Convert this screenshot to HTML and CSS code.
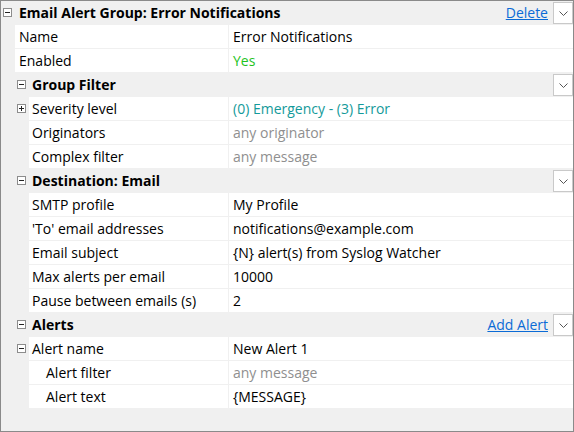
FILE: index.html
```html
<!DOCTYPE html>
<html>
<head>
<meta charset="utf-8">
<link rel="stylesheet" href="styles.css">
</head>
<body>
<div class="panel">
  <div class="row head">
    <div class="gut g1"><span class="tog minus"></span></div>
    <div class="title t0">Email Alert Group: Error Notifications</div>
    <a class="link" href="#">Delete</a>
    <span class="dd"><svg width="9" height="5" viewBox="0 0 9 5"><path d="M0.5 0.5 L4.5 4.5 L8.5 0.5" fill="none" stroke="#555" stroke-width="1"/></svg></span>
  </div>
  <div class="row">
    <div class="gut g1"></div>
    <div class="cells"><div class="lab">Name</div><div class="val">Error Notifications</div></div>
  </div>
  <div class="row">
    <div class="gut g1"></div>
    <div class="cells"><div class="lab">Enabled</div><div class="val green">Yes</div></div>
  </div>
  <div class="row head">
    <div class="gut g2"><span class="tog minus"></span></div>
    <div class="title">Group Filter</div>
    <span class="dd"><svg width="9" height="5" viewBox="0 0 9 5"><path d="M0.5 0.5 L4.5 4.5 L8.5 0.5" fill="none" stroke="#555" stroke-width="1"/></svg></span>
  </div>
  <div class="row">
    <div class="gut g2"><span class="tog plus"></span></div>
    <div class="cells"><div class="lab">Severity level</div><div class="val teal">(0) Emergency - (3) Error</div></div>
  </div>
  <div class="row">
    <div class="gut g2"></div>
    <div class="cells"><div class="lab">Originators</div><div class="val muted">any originator</div></div>
  </div>
  <div class="row">
    <div class="gut g2"></div>
    <div class="cells"><div class="lab">Complex filter</div><div class="val muted">any message</div></div>
  </div>
  <div class="row head">
    <div class="gut g2"><span class="tog minus"></span></div>
    <div class="title">Destination: Email</div>
    <span class="dd"><svg width="9" height="5" viewBox="0 0 9 5"><path d="M0.5 0.5 L4.5 4.5 L8.5 0.5" fill="none" stroke="#555" stroke-width="1"/></svg></span>
  </div>
  <div class="row">
    <div class="gut g2"></div>
    <div class="cells"><div class="lab">SMTP profile</div><div class="val">My Profile</div></div>
  </div>
  <div class="row">
    <div class="gut g2"></div>
    <div class="cells"><div class="lab">'To' email addresses</div><div class="val">notifications@example.com</div></div>
  </div>
  <div class="row">
    <div class="gut g2"></div>
    <div class="cells"><div class="lab">Email subject</div><div class="val">{N} alert(s) from Syslog Watcher</div></div>
  </div>
  <div class="row">
    <div class="gut g2"></div>
    <div class="cells"><div class="lab">Max alerts per email</div><div class="val">10000</div></div>
  </div>
  <div class="row">
    <div class="gut g2"></div>
    <div class="cells"><div class="lab">Pause between emails (s)</div><div class="val">2</div></div>
  </div>
  <div class="row head">
    <div class="gut g2"><span class="tog minus"></span></div>
    <div class="title">Alerts</div>
    <a class="link" href="#">Add Alert</a>
    <span class="dd"><svg width="9" height="5" viewBox="0 0 9 5"><path d="M0.5 0.5 L4.5 4.5 L8.5 0.5" fill="none" stroke="#555" stroke-width="1"/></svg></span>
  </div>
  <div class="row">
    <div class="gut g2"><span class="tog minus"></span></div>
    <div class="cells"><div class="lab">Alert name</div><div class="val">New Alert 1</div></div>
  </div>
  <div class="row">
    <div class="gut g2"></div>
    <div class="cells"><div class="lab sub">Alert filter</div><div class="val muted">any message</div></div>
  </div>
  <div class="row">
    <div class="gut g2"></div>
    <div class="cells"><div class="lab sub">Alert text</div><div class="val">{MESSAGE}</div></div>
  </div>
</div>
</body>
</html>
```
FILE: styles.css
```css
html, body {
  margin: 0;
  padding: 0;
  background: #ffffff;
}
.panel {
  width: 574px;
  height: 432px;
  box-sizing: border-box;
  border: 1px solid #8a8a8a;
  background: #f0f0f0;
  font-family: "Open Sans", "Noto Sans", sans-serif;
  font-size: 14px;
  color: #000;
  overflow: hidden;
}
.row {
  display: flex;
  height: 24px;
  box-sizing: border-box;
  border-bottom: 1px solid #f0f0f0;
  align-items: stretch;
}
.row.head {
  background: #f0f0f0;
  align-items: center;
}
.gut {
  flex: none;
  display: flex;
  align-items: center;
}
.g1 { width: 14px; }
.g2 { width: 28px; }
.g1 .tog { margin-left: 2px; }
.g2 .tog { margin-left: 16px; }
.tog {
  position: relative;
  width: 9px;
  height: 9px;
  box-sizing: border-box;
  border: 1px solid #8c8c8c;
  background: #fff;
}
.tog::before {
  content: "";
  position: absolute;
  left: 1px;
  top: 3px;
  width: 5px;
  height: 1px;
  background: #222;
}
.tog.plus::after {
  content: "";
  position: absolute;
  left: 3px;
  top: 1px;
  width: 1px;
  height: 5px;
  background: #222;
}
.title {
  flex: 1;
  font-weight: bold;
  padding-left: 3px;
  white-space: nowrap;
}
.title.t0 { padding-left: 4px; }
.link {
  color: #0b6bd6;
  text-decoration: underline;
  margin-right: 5px;
}
.dd {
  flex: none;
  width: 20px;
  height: 22px;
  box-sizing: border-box;
  border: 1px solid #c9c9c9;
  background: #fff;
  display: flex;
  align-items: center;
  justify-content: center;
  align-self: flex-start;
  margin-top: 1px;
}
.cells {
  flex: 1;
  display: flex;
  background: #fff;
}
.lab {
  box-sizing: border-box;
  border-right: 1px solid #f0f0f0;
  padding-left: 3px;
  display: flex;
  align-items: center;
  white-space: nowrap;
}
.g1 + .cells .lab { width: 214px; padding-left: 4px; }
.g2 + .cells .lab { width: 200px; }
.lab.sub { padding-left: 17px; }
.val {
  flex: 1;
  padding-left: 4px;
  display: flex;
  align-items: center;
  white-space: nowrap;
}
.green { color: #1ec31e; }
.teal { color: #149a9a; }
.muted { color: #8f8f8f; }
```
